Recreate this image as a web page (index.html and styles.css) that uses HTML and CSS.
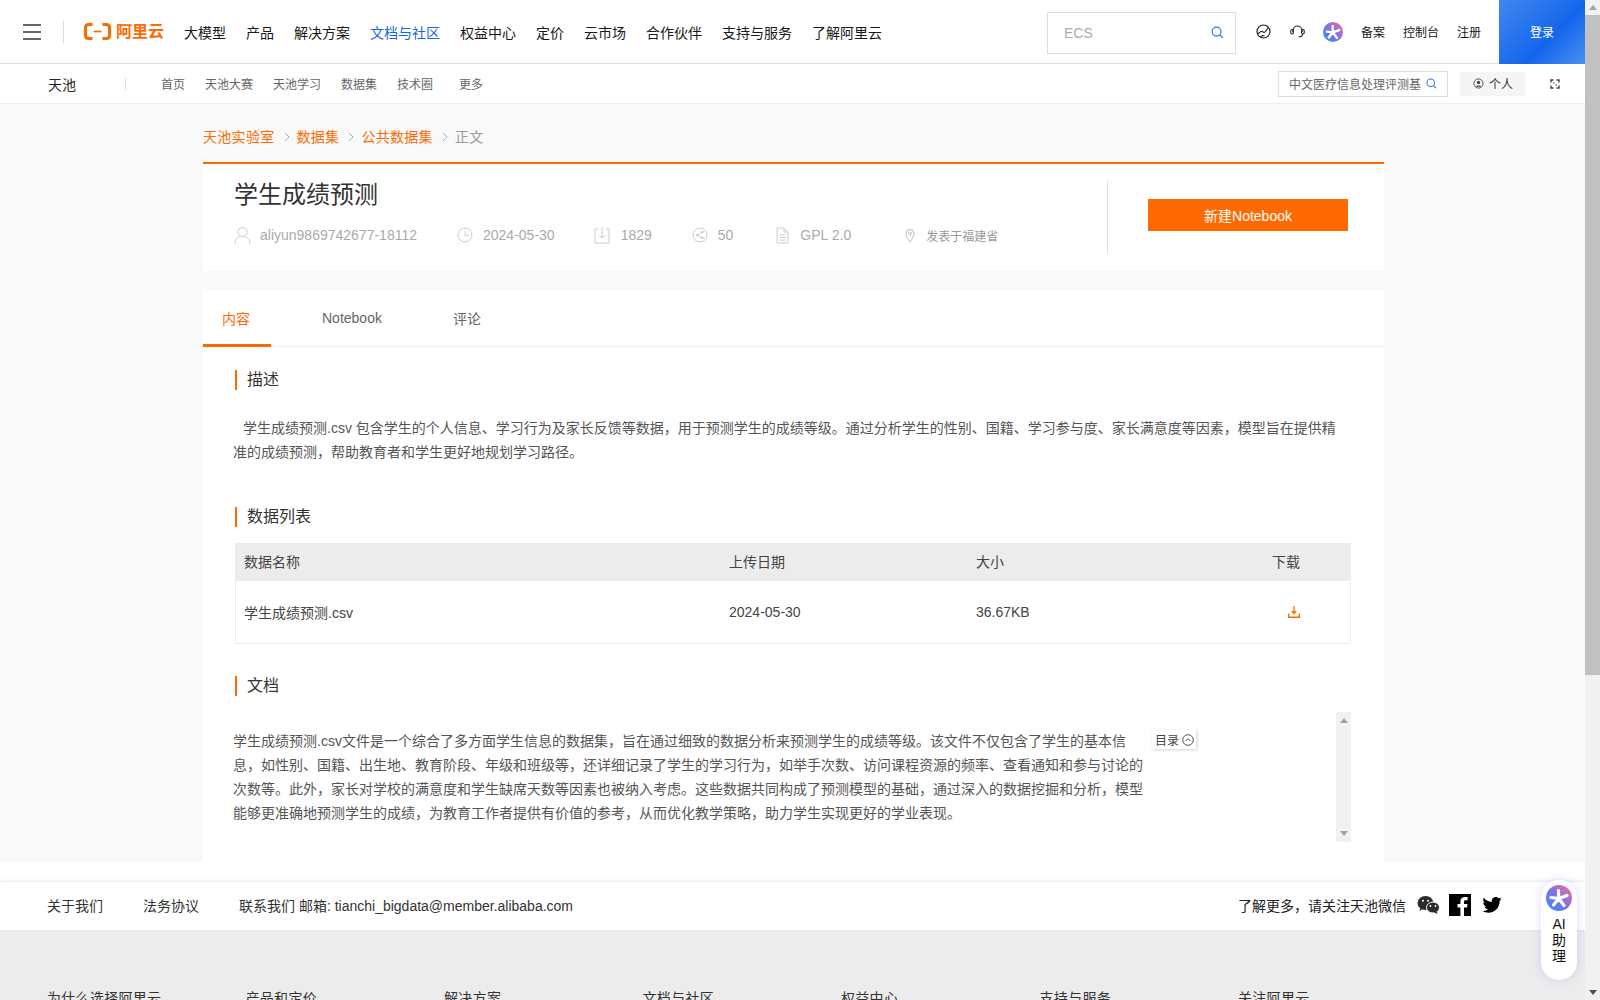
FILE: index.html
```html
<!DOCTYPE html>
<html lang="zh-CN">
<head>
<meta charset="utf-8">
<title>学生成绩预测</title>
<link rel="stylesheet" href="styles.css">
</head>
<body>
<svg class="defs" width="0" height="0" aria-hidden="true">
  <defs>
    <linearGradient id="starg" x1="0.1" y1="0.9" x2="0.9" y2="0.1">
      <stop offset="0" stop-color="#3d8bf5"/>
      <stop offset="0.55" stop-color="#8a6fe0"/>
      <stop offset="1" stop-color="#e0709f"/>
    </linearGradient>
    <symbol id="star" viewBox="0 0 26 26">
      <circle cx="13" cy="13" r="13" fill="url(#starg)"/>
      <path d="M12.800 13.500L12.500 5.500M12.800 13.500L21 10.500M12.800 13.500L18 20.500M12.800 13.500L7.500 20M12.800 13.500L5 12.500" stroke="#fff" stroke-width="3.200" stroke-linecap="round" fill="none"/>
    </symbol>
    <symbol id="searchi" viewBox="0 0 14 14">
      <circle cx="6" cy="6" r="4.800" fill="none" stroke="currentColor" stroke-width="1.300"/>
      <path d="M9.600 9.600l3.200 3.200" stroke="currentColor" stroke-width="1.400" fill="none"/>
    </symbol>
  </defs>
</svg>
<div class="window">
  <div class="page">
    <header class="topbar">
      <div class="burger"><span></span><span></span><span></span></div>
      <div class="logo">
        <svg class="logo-mark" viewBox="0 0 27 17"><path d="M8.500 1.500H4.600C2.800 1.500 1.500 2.800 1.500 4.600v7.800c0 1.800 1.300 3.100 3.100 3.100h3.900M18.500 1.500h3.900c1.800 0 3.100 1.300 3.100 3.100v7.800c0 1.800-1.300 3.100-3.100 3.100h-3.900" fill="none" stroke="#ff6a00" stroke-width="3"/><path d="M9.500 8.500h8" stroke="#ff6a00" stroke-width="1.600"/></svg>
        <span class="logo-text">阿里云</span>
      </div>
      <nav class="mainnav">
        <a>大模型</a><a>产品</a><a>解决方案</a><a class="on">文档与社区</a><a>权益中心</a><a>定价</a><a>云市场</a><a>合作伙伴</a><a>支持与服务</a><a>了解阿里云</a>
      </nav>
      <div class="topsearch">
        <span>ECS</span>
        <svg class="ic12"><use href="#searchi"/></svg>
      </div>
      <svg class="ic-globe" viewBox="0 0 15 15"><circle cx="7.500" cy="7.500" r="6.500" fill="none" stroke="#222" stroke-width="1.200"/><path d="M1.500 10c2-1 2.500-3 4.500-2.500s2 2 3.500 0S12 3.500 12 3.500M4.500 13c1-2 2.500-1.500 4-1" fill="none" stroke="#222" stroke-width="1.100"/></svg>
      <svg class="ic-head" viewBox="0 0 15 15"><path d="M3 8V6.500a4.500 4.500 0 0 1 9 0V8" fill="none" stroke="#222" stroke-width="1.200"/><rect x="0.800" y="5.500" width="2.600" height="4.500" rx="1.200" fill="none" stroke="#222" stroke-width="1.100"/><rect x="11.600" y="5.500" width="2.600" height="4.500" rx="1.200" fill="none" stroke="#222" stroke-width="1.100"/><path d="M12.500 10c0 2.500-2 3-4 3" fill="none" stroke="#222" stroke-width="1.100"/></svg>
      <svg class="ic-star"><use href="#star"/></svg>
      <a class="toplink">备案</a><a class="toplink">控制台</a><a class="toplink">注册</a>
      <a class="login">登录</a>
    </header>

    <div class="subnav">
      <span class="brand">天池</span>
      <i class="subsep"></i>
      <a class="m0">首页</a><a>天池大赛</a><a>天池学习</a><a>数据集</a><a class="m1">技术圈</a><a class="m2">更多</a>
      <div class="subsearch">
        <span>中文医疗信息处理评测基</span>
        <svg class="ic11"><use href="#searchi"/></svg>
      </div>
      <div class="personal">
        <svg class="ic-person" viewBox="0 0 12 12"><circle cx="6" cy="6" r="5" fill="none" stroke="#444" stroke-width="1"/><circle cx="6" cy="4.800" r="1.800" fill="#444"/><path d="M2.800 9.500c.8-1.800 5.600-1.800 6.400 0" fill="#444"/></svg>
        <span>个人</span>
      </div>
      <svg class="ic-full" viewBox="0 0 10 10"><path d="M1 3.500V1h2.500M9 3.500V1H6.500M1 6.500V9h2.500M9 6.500V9H6.500" fill="none" stroke="#444" stroke-width="1.400"/><path d="M3 4h1.500M5.500 6H7" stroke="#444" stroke-width="1.200"/></svg>
    </div>

    <main class="main">
      <div class="crumbs">
        <a>天池实验室</a><svg class="chev" viewBox="0 0 6 10"><path d="M1 1l4 4-4 4" fill="none" stroke="#aaa"/></svg><a>数据集</a><svg class="chev" viewBox="0 0 6 10"><path d="M1 1l4 4-4 4" fill="none" stroke="#aaa"/></svg><a>公共数据集</a><svg class="chev" viewBox="0 0 6 10"><path d="M1 1l4 4-4 4" fill="none" stroke="#aaa"/></svg><span>正文</span>
      </div>

      <section class="headcard">
        <div class="headleft">
          <h1>学生成绩预测</h1>
          <div class="meta">
            <svg class="mi mi-user" viewBox="0 0 17 18"><circle cx="8.500" cy="6" r="4.500" fill="none" stroke="#ccc"/><path d="M1 18c0-5 3-7 5.500-7.500M16 18c0-5-3-7-5.500-7.500" fill="none" stroke="#ccc"/></svg>
            <span class="mt w1">aliyun9869742677-18112</span>
            <svg class="mi mi-clock" viewBox="0 0 16 16"><circle cx="8" cy="8" r="7" fill="none" stroke="#ccc"/><path d="M8 4v4.500h4" fill="none" stroke="#ccc"/></svg>
            <span class="mt w2">2024-05-30</span>
            <svg class="mi mi-dl" viewBox="0 0 16 18"><path d="M4 3H1v14h14V3h-3M8 1v11M5 9l3 3 3-3" fill="none" stroke="#ccc"/></svg>
            <span class="mt w3">1829</span>
            <svg class="mi mi-share" viewBox="0 0 16 16"><circle cx="8" cy="8" r="7" fill="none" stroke="#ccc"/><circle cx="5" cy="8" r="1.300" fill="#ccc"/><circle cx="10.500" cy="5" r="1.300" fill="#ccc"/><circle cx="10.500" cy="11" r="1.300" fill="#ccc"/><path d="M5 8l5.500-3M5 8l5.500 3" stroke="#ccc" fill="none"/></svg>
            <span class="mt w4">50</span>
            <svg class="mi mi-doc" viewBox="0 0 13 17"><path d="M1 1h7l4 4v11H1zM8 1v4h4M3.500 8h6M3.500 10.500h6M3.500 13h6" fill="none" stroke="#ccc"/></svg>
            <span class="mt w5">GPL 2.0</span>
            <svg class="mi mi-pin" viewBox="0 0 10 15"><path d="M5 14C3 11 1 8.500 1 5.500a4 4 0 0 1 8 0C9 8.500 7 11 5 14z" fill="none" stroke="#bbb"/><circle cx="5" cy="5.500" r="1.500" fill="none" stroke="#bbb"/></svg>
            <span class="mt-small">发表于福建省</span>
          </div>
        </div>
        <div class="headright">
          <a class="newbtn">新建Notebook</a>
        </div>
      </section>

      <section class="tabcard">
        <div class="tabs">
          <a class="tab on">内容</a><a class="tab t2">Notebook</a><a class="tab t3">评论</a>
        </div>
        <div class="tabbody">
          <h2 class="sect s1">描述</h2>
          <p class="desc">学生成绩预测.csv 包含学生的个人信息、学习行为及家长反馈等数据，用于预测学生的成绩等级。通过分析学生的性别、国籍、学习参与度、家长满意度等因素，模型旨在提供精准的成绩预测，帮助教育者和学生更好地规划学习路径。</p>
          <h2 class="sect s2">数据列表</h2>
          <div class="dtable">
            <div class="drow dhead"><span class="c1">数据名称</span><span class="c2">上传日期</span><span class="c3">大小</span><span class="c4">下载</span></div>
            <div class="drow dbody"><span class="c1">学生成绩预测.csv</span><span class="c2">2024-05-30</span><span class="c3">36.67KB</span>
              <span class="c4 c4i"><svg class="ic-dl" viewBox="0 0 12 12"><path d="M6 0v7M3.800 5L6 7.500 8.200 5" fill="none" stroke="#ff6a00" stroke-width="1.300"/><path d="M.7 7.500v3.800h10.600V7.500" fill="none" stroke="#ff6a00" stroke-width="1.400"/></svg></span>
            </div>
          </div>
          <h2 class="sect s3">文档</h2>
          <div class="docbox">
            <p class="doctext">学生成绩预测.csv文件是一个综合了多方面学生信息的数据集，旨在通过细致的数据分析来预测学生的成绩等级。该文件不仅包含了学生的基本信息，如性别、国籍、出生地、教育阶段、年级和班级等，还详细记录了学生的学习行为，如举手次数、访问课程资源的频率、查看通知和参与讨论的次数等。此外，家长对学校的满意度和学生缺席天数等因素也被纳入考虑。这些数据共同构成了预测模型的基础，通过深入的数据挖掘和分析，模型能够更准确地预测学生的成绩，为教育工作者提供有价值的参考，从而优化教学策略，助力学生实现更好的学业表现。</p>
            <div class="toc"><span>目录</span><svg class="ic-toc" viewBox="0 0 12 12"><circle cx="6" cy="6" r="5.300" fill="none" stroke="#555"/><path d="M3.800 7L6 4.600 8.200 7" fill="none" stroke="#555"/></svg></div>
            <div class="docscroll"><i class="arr up"></i><i class="arr down"></i></div>
          </div>
        </div>
      </section>
    </main>

    <div class="gap"></div>

    <div class="footbar">
      <a class="f1">关于我们</a><a class="f1">法务协议</a><span class="contact">联系我们 邮箱: tianchi_bigdata@member.alibaba.com</span>
      <span class="follow">了解更多，请关注天池微信</span>
      <svg class="ic-wx" viewBox="0 0 22 18"><ellipse cx="8" cy="7" rx="8" ry="7" fill="#2b2b2b"/><path d="M3 11.500l-1 3.500 4-2.500z" fill="#2b2b2b"/><ellipse cx="15.500" cy="11.500" rx="6.500" ry="5.500" fill="#2b2b2b" stroke="#fff" stroke-width="1"/><path d="M19 15l1 3-3.500-1.800z" fill="#2b2b2b"/><circle cx="5.500" cy="4.800" r="1" fill="#fff"/><circle cx="10.500" cy="4.800" r="1" fill="#fff"/><circle cx="13" cy="10" r=".9" fill="#fff"/><circle cx="18" cy="10" r=".9" fill="#fff"/></svg>
      <svg class="ic-fb" viewBox="0 0 22 22"><rect width="22" height="22" fill="#000"/><path d="M15 22v-8.500h3l.5-3.500H15V7.800c0-1 .4-1.600 1.700-1.600h1.900V3.100c-.6-.1-1.600-.2-2.700-.2-2.700 0-4.500 1.600-4.500 4.500V10H8.500v3.500h2.900V22z" fill="#fff"/></svg>
      <svg class="ic-tw" viewBox="0 0 24 20"><path d="M24 2.400c-.9.400-1.800.7-2.800.8 1-.6 1.800-1.600 2.200-2.700-1 .6-2 1-3.100 1.200A4.900 4.900 0 0 0 11.900 6.200C7.800 6 4.200 4 1.700.9c-1.300 2.200-.7 5.100 1.500 6.600-.8 0-1.600-.2-2.200-.6 0 2.400 1.700 4.500 3.900 5-.7.200-1.500.2-2.200.1.600 2 2.400 3.400 4.600 3.400A9.900 9.900 0 0 1 0 17.400 14 14 0 0 0 7.500 19.600c9.100 0 14.300-7.700 14-14.600 1-.7 1.800-1.600 2.500-2.600z" fill="#000"/></svg>
    </div>

    <footer class="sitefoot">
      <span>为什么选择阿里云</span><span>产品和定价</span><span>解决方案</span><span>文档与社区</span><span>权益中心</span><span>支持与服务</span><span>关注阿里云</span>
    </footer>

    <aside class="aihelp">
      <svg class="ic-aistar"><use href="#star"/></svg>
      <span>AI</span><span>助</span><span>理</span>
    </aside>
  </div>

  <div class="scrollbar">
    <i class="arr up"></i>
    <div class="thumb"></div>
    <i class="arr down"></i>
  </div>
</div>
</body>
</html>
```

FILE: styles.css
```css
* { box-sizing: border-box; }
html, body { margin: 0; padding: 0; height: 100%; overflow: hidden; }
body {
  font-family: "Liberation Sans", "Noto Sans CJK SC", sans-serif;
  font-size: 14px;
  color: #333;
  background: #fff;
}
.defs { position: absolute; }
a { color: inherit; text-decoration: none; }
svg { display: block; flex: none; }

.window { display: flex; height: 1000px; width: 1600px; overflow: hidden; }
.page { position: relative; width: 1585px; height: 1000px; overflow: hidden; display: flex; flex-direction: column; }

/* fake page scrollbar */
.scrollbar { width: 15px; height: 1000px; background: #f1f1f1; display: flex; flex-direction: column; align-items: center; position: relative; }
.thumb { width: 15px; height: 660px; margin-top: 15px; background: #c1c1c1; }
.arr { display: block; width: 0; height: 0; border-left: 4px solid transparent; border-right: 4px solid transparent; }
.arr.up { border-bottom: 5px solid #a3a3a3; }
.arr.down { border-top: 5px solid #505050; }
.scrollbar .arr.up { position: absolute; top: 5px; }
.scrollbar .arr.down { position: absolute; bottom: 5px; }

/* top bar */
.topbar { flex: none; height: 64px; display: flex; align-items: center; border-bottom: 1px solid #ddd; padding-left: 23px; background: #fff; position: relative; white-space: nowrap; }
.burger { flex: none; width: 18px; height: 16px; display: flex; flex-direction: column; justify-content: space-between; }
.burger span { display: block; height: 2px; background: #666; }
.logo { flex: none; display: flex; align-items: center; margin-left: 43px; width: 80px; position: relative; }
.logo::before { content: ""; position: absolute; left: -21px; top: -3px; width: 1px; height: 24px; background: #ddd; }
.logo-mark { width: 27px; height: 17px; }
.logo-text { margin-left: 5px; font-size: 16px; font-weight: 700; color: #ff6a00; line-height: 17px; }
.mainnav { flex: none; display: flex; gap: 20px; margin-left: 20px; font-size: 14px; color: #181818; }
.mainnav .on { color: #1366ec; }
.topsearch { flex: none; width: 189px; height: 42px; margin-left: 165px; margin-top: 2px; border: 1px solid #ddd; display: flex; align-items: center; justify-content: space-between; padding: 0 11px 0 16px; color: #aaa; }
.ic12 { width: 13px; height: 13px; color: #2a78f0; }
.ic-globe { width: 15px; height: 15px; margin-left: 20px; }
.ic-head { width: 15px; height: 15px; margin-left: 19px; }
.ic-star { width: 20px; height: 20px; margin-left: 18px; }
.toplink { flex: none; font-size: 12px; color: #181818; margin-left: 18px; }
.login { flex: none; width: 86px; height: 64px; margin-left: 18px; background: linear-gradient(135deg, #4287ee 0%, #1366ec 60%, #4a8ff0 100%); color: #fff; font-size: 12px; display: flex; align-items: center; justify-content: center; }

/* sub nav */
.subnav { flex: none; height: 40px; display: flex; align-items: center; border-bottom: 1px solid #eee; padding-left: 48px; font-size: 12px; color: #666; background: #fff; white-space: nowrap; }
.brand { font-size: 14px; color: #222; width: 28px; }
.subsep { display: block; width: 1px; height: 12px; background: #ddd; margin-left: 49px; }
.subnav a { margin-left: 20px; }
.subnav a.m0 { margin-left: 35px; }
.subnav a.m1 { margin-left: 20px; }
.subnav a.m2 { margin-left: 26px; }
.subsearch { width: 170px; height: 26px; margin-left: 795px; border: 1px solid #ddd; display: flex; align-items: center; justify-content: space-between; padding: 0 10px 0 10px; color: #666; overflow: hidden; }
.ic11 { width: 11px; height: 11px; color: #2a78f0; }
.personal { width: 65px; height: 24px; margin-left: 12px; background: #f5f5f5; display: flex; align-items: center; padding-left: 13px; gap: 5px; color: #333; }
.ic-person { width: 11px; height: 11px; }
.ic-full { width: 10px; height: 10px; margin-left: 25px; }

/* main */
.main { flex: none; height: 758px; background: #f9f9f9; padding-left: 203px; overflow: hidden; }
.crumbs { width: 1181px; height: 58px; display: flex; align-items: center; padding-top: 6px; color: #999; letter-spacing: .3px; }
.crumbs a { color: #ff6a00; }
.chev { width: 6px; height: 10px; margin: 2px 7px 0 9px; }
.headcard { width: 1181px; height: 109px; border-top: 2px solid #ff6a00; background: #fff; display: flex; padding-top: 17px; }
.headleft { width: 905px; padding-left: 31px; border-right: 1px solid #ddd; height: 72px; }
h1 { margin: -2px 0 0; font-size: 24px; font-weight: 400; line-height: 32px; color: #333; }
.meta { display: flex; align-items: center; height: 20px; margin-top: 14px; color: #aaa; }
.mi { height: 18px; }
.mi-user { width: 17px; }
.mi-clock { width: 16px; height: 16px; }
.mi-dl { width: 16px; }
.mi-share { width: 16px; height: 16px; }
.mi-doc { width: 13px; height: 17px; }
.mi-pin { width: 10px; height: 15px; }
.mt { margin-left: 9px; margin-right: 40px; }
.mt.w2 { margin-left: 10px; margin-right: 39px; }
.mt.w3 { margin-left: 11px; }
.mt.w4 { margin-left: 10px; margin-right: 43px; }
.mt.w5 { margin-left: 11px; margin-right: 54px; }
.mt-small { font-size: 12px; margin-left: 11px; color: #999; }
.headright { flex: 1; padding-top: 18px; padding-left: 40px; }
.newbtn { display: flex; width: 200px; height: 32px; background: #ff6a00; color: #fff; align-items: center; justify-content: center; }

.tabcard { width: 1181px; margin-top: 20px; height: 600px; background: #fff; }
.tabs { height: 56px; display: flex; border-bottom: 1px solid #eee; color: #666; }
.tab { display: flex; align-items: center; height: 56px; padding-bottom: 2px; }
.tab.on { width: 68px; justify-content: center; color: #ff6a00; border-bottom: 3px solid #ff6a00; padding: 1px 2px 0 0; }
.tab.t2 { margin-left: 51px; }
.tab.t3 { margin-left: 71px; }
.tabbody { padding: 0 33px 0 30px; }
.sect { margin: 0 0 0 2px; padding-left: 10px; height: 20px; border-left: 2px solid #ff6a00; font-size: 16px; font-weight: 400; line-height: 20px; color: #333; }
.s1 { margin-top: 23px; }
.s2 { margin-top: 43px; }
.s3 { margin-top: 32px; }
.desc { margin: 26px 0 0; line-height: 24px; width: 1110px; color: #555; text-indent: 10px; }
.dtable { margin: 16px 0 0 2px; width: 1116px; border: 1px solid #eee; border-top: 0; color: #444; }
.drow { display: flex; align-items: center; }
.dhead { height: 38px; background: #ececec; margin: 0 -1px; padding-left: 1px; padding-bottom: 2px; }
.dbody { height: 62px; }
.c1 { width: 493px; padding-left: 8px; }
.c2 { width: 247px; }
.c3 { width: 296px; }
.c4 { width: 60px; }
.c4i { padding-left: 16px; }
.ic-dl { width: 12px; height: 12px; }
.docbox { margin-top: 16px; height: 130px; display: flex; position: relative; }
.doctext { margin: 17px 0 0; width: 910px; line-height: 24px; color: #555; }
.toc { width: 44px; height: 19px; margin: 18px 0 0 9px; display: flex; align-items: center; padding-left: 3px; gap: 3px; font-size: 12px; color: #444; background: #fff; box-shadow: 1px 1px 3px rgba(0,0,0,.18); }
.ic-toc { width: 12px; height: 12px; }
.docscroll { width: 15px; height: 130px; margin-left: auto; background: #f1f1f1; display: flex; flex-direction: column; justify-content: space-between; align-items: center; padding: 6px 0; }
.docscroll .arr.down { border-top-color: #a3a3a3; }

.gap { flex: none; height: 20px; background: #fff; }
.footbar { flex: none; height: 48px; background: #fff; display: flex; align-items: center; padding: 0 0 2px 47px; box-shadow: 0 -1px 3px rgba(0,0,0,.1); color: #333; position: relative; white-space: nowrap; }
.f1 { margin-right: 40px; }
.contact { width: 999px; }
.follow { color: #222; }
.ic-wx { width: 23px; height: 18px; margin-left: 11px; }
.ic-fb { width: 22px; height: 22px; margin-left: 9px; }
.ic-tw { width: 20px; height: 16px; margin-left: 11px; }
.sitefoot { flex: none; height: 70px; background: #ececec; display: grid; grid-template-columns: repeat(7, 198.5px); padding: 60px 0 0 47px; color: #333; line-height: 16px; overflow: hidden; letter-spacing: .3px; }

.aihelp { position: absolute; left: 1541px; top: 880px; width: 36px; height: 100px; border-radius: 18px; background: #fff; box-shadow: 0 0 10px rgba(110,110,255,.25); display: flex; flex-direction: column; align-items: center; color: #111; line-height: 16px; padding-top: 5px; }
.ic-aistar { width: 26px; height: 26px; margin-bottom: 5px; }
```
